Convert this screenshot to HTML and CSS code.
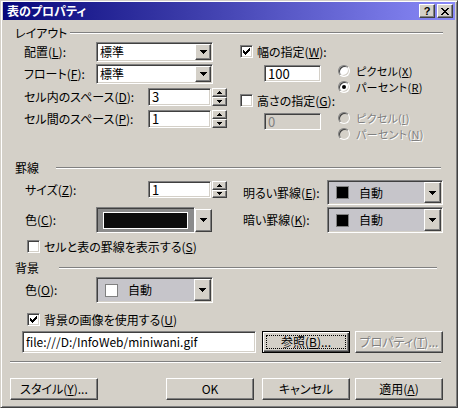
FILE: index.html
```html
<!DOCTYPE html>
<html lang="ja">
<head>
<meta charset="utf-8">
<title>表のプロパティ</title>
<link rel="stylesheet" href="styles.css">
</head>
<body>
<div class="window">
  <div class="caption">
    <span class="title">表のプロパティ</span>
    <span class="cap-btns">
      <span class="cap-btn help">?</span>
      <span class="cap-btn"><svg width="8" height="7" viewBox="0 0 8 7"><path d="M0 0h2v1H0zM6 0h2v1H6zM1 1h2v1H1zM5 1h2v1H5zM2 2h4v1H2zM3 3h2v1H3zM2 4h4v1H2zM1 5h2v1H1zM5 5h2v1H5zM0 6h2v1H0zM6 6h2v1H6z"/></svg></span>
    </span>
  </div>

  <div class="content">
    <div class="group-head gh-layout"><span class="gh-label">レイアウト</span><span class="etch"></span></div>

    <div class="layout">
      <div class="col-left">
        <div class="row r-c1">
          <span class="lbl w72">配置(<u>L</u>):</span>
          <div class="combo w117"><span class="combo-text">標準</span><span class="dd-btn"><svg width="7" height="4" viewBox="0 0 7 4"><path d="M0 0h7v1H6v1H5v1H4v1H3V3H2V2H1V1H0z"/></svg></span></div>
        </div>
        <div class="row r-c2">
          <span class="lbl w72">フロート(<u>F</u>):</span>
          <div class="combo w117"><span class="combo-text">標準</span><span class="dd-btn"><svg width="7" height="4" viewBox="0 0 7 4"><path d="M0 0h7v1H6v1H5v1H4v1H3V3H2V2H1V1H0z"/></svg></span></div>
        </div>
        <div class="row r-s">
          <span class="lbl w124">セル内のスペース(<u>D</u>):</span>
          <div class="spin"><span class="field num">3</span><span class="spinner"><span class="sp-btn"><svg width="5" height="3" viewBox="0 0 5 3"><path d="M2 0h1v1h1v1h1v1H0V2h1V1h1z"/></svg></span><span class="sp-btn"><svg width="5" height="3" viewBox="0 0 5 3"><path d="M0 0h5v1H4v1H3v1H2V2H1V1H0z"/></svg></span></span></div>
        </div>
        <div class="row r-s">
          <span class="lbl w124">セル間のスペース(<u>P</u>):</span>
          <div class="spin"><span class="field num">1</span><span class="spinner"><span class="sp-btn"><svg width="5" height="3" viewBox="0 0 5 3"><path d="M2 0h1v1h1v1h1v1H0V2h1V1h1z"/></svg></span><span class="sp-btn"><svg width="5" height="3" viewBox="0 0 5 3"><path d="M0 0h5v1H4v1H3v1H2V2H1V1H0z"/></svg></span></span></div>
        </div>
      </div>

      <div class="col-right">
        <div class="chk-row cr1">
          <span class="chk"><svg width="7" height="7" viewBox="0 0 7 7"><path d="M0 2h1v1h1v1h1V3h1V2h1V1h1V0h1v3H6v1H5v1H4v1H3v1H2V6H1V5H0z"/></svg></span>
          <span class="chk-label">幅の指定(<u>W</u>):</span>
        </div>
        <div class="sub s1">
          <span class="field num fw">100</span>
          <div class="radios">
            <div class="radio-row"><span class="radio"></span><span class="radio-label">ピクセル(<u>X</u>)</span></div>
            <div class="radio-row"><span class="radio"><span class="dot"></span></span><span class="radio-label">パーセント(<u>R</u>)</span></div>
          </div>
        </div>
        <div class="chk-row cr2">
          <span class="chk"></span>
          <span class="chk-label">高さの指定(<u>G</u>):</span>
        </div>
        <div class="sub s2">
          <span class="field num fw off">0</span>
          <div class="radios">
            <div class="radio-row"><span class="radio off"></span><span class="radio-label dis">ピクセル(<u>I</u>)</span></div>
            <div class="radio-row"><span class="radio off"></span><span class="radio-label dis">パーセント(<u>N</u>)</span></div>
          </div>
        </div>
      </div>
    </div>

    <div class="group-head gh-border"><span class="gh-label">罫線</span><span class="etch"></span></div>

    <div class="border-grid">
      <div class="cell-l">
        <div class="row r-size">
          <span class="lbl w123">サイズ(<u>Z</u>):</span>
          <div class="spin sp17"><span class="field num">1</span><span class="spinner"><span class="sp-btn"><svg width="5" height="3" viewBox="0 0 5 3"><path d="M2 0h1v1h1v1h1v1H0V2h1V1h1z"/></svg></span><span class="sp-btn"><svg width="5" height="3" viewBox="0 0 5 3"><path d="M0 0h5v1H4v1H3v1H2V2H1V1H0z"/></svg></span></span></div>
        </div>
      </div>
      <div class="cell-r">
        <span class="lbl w84">明るい罫線(<u>E</u>):</span>
        <div class="cdrop h25"><span class="cd-val"><span class="sw sw-black"></span><span class="cd-text">自動</span></span><span class="dd-btn tall"><svg width="7" height="4" viewBox="0 0 7 4"><path d="M0 0h7v1H6v1H5v1H4v1H3V3H2V2H1V1H0z"/></svg></span></div>
      </div>
      <div class="cell-l row">
        <span class="lbl w71">色(<u>C</u>):</span>
        <div class="cpick">
          <span class="cp-frame"><span class="cp-sw"></span></span>
          <span class="dd-btn cp-arrow"><svg width="7" height="4" viewBox="0 0 7 4"><path d="M0 0h7v1H6v1H5v1H4v1H3V3H2V2H1V1H0z"/></svg></span>
        </div>
      </div>
      <div class="cell-r">
        <span class="lbl w84">暗い罫線(<u>K</u>):</span>
        <div class="cdrop h26"><span class="cd-val"><span class="sw sw-black"></span><span class="cd-text">自動</span></span><span class="dd-btn tall"><svg width="7" height="4" viewBox="0 0 7 4"><path d="M0 0h7v1H6v1H5v1H4v1H3V3H2V2H1V1H0z"/></svg></span></div>
      </div>
    </div>

    <div class="chk-row cr3">
      <span class="chk"></span>
      <span class="chk-label">セルと表の罫線を表示する(<u>S</u>)</span>
    </div>

    <div class="group-head gh-bg"><span class="gh-label">背景</span><span class="etch"></span></div>

    <div class="row r-bgcolor">
      <span class="lbl w71">色(<u>O</u>):</span>
      <div class="cdrop h26 w117"><span class="cd-val"><span class="sw sw-white"></span><span class="cd-text">自動</span></span><span class="dd-btn tall"><svg width="7" height="4" viewBox="0 0 7 4"><path d="M0 0h7v1H6v1H5v1H4v1H3V3H2V2H1V1H0z"/></svg></span></div>
    </div>

    <div class="chk-row cr4">
      <span class="chk"><svg width="7" height="7" viewBox="0 0 7 7"><path d="M0 2h1v1h1v1h1V3h1V2h1V1h1V0h1v3H6v1H5v1H4v1H3v1H2V6H1V5H0z"/></svg></span>
      <span class="chk-label">背景の画像を使用する(<u>U</u>)</span>
    </div>

    <div class="row r-path">
      <span class="field path">file:///D:/InfoWeb/miniwani.gif</span>
      <span class="btn default b-browse"><span class="focus">参照(<u>B</u>)...</span></span>
      <span class="btn b-prop dis">プロパティ(<u>T</u>)...</span>
    </div>

    <div class="sep"></div>

    <div class="row r-buttons">
      <span class="btn b-style">スタイル(<u>Y</u>)...</span>
      <span class="btn b-ok">OK</span>
      <span class="btn b-cancel">キャンセル</span>
      <span class="btn b-apply">適用(<u>A</u>)</span>
    </div>
  </div>
</div>
</body>
</html>
```

FILE: styles.css
```css
* { box-sizing: border-box; }
html, body { margin: 0; padding: 0; }
body {
  width: 458px; height: 408px; overflow: hidden;
  background: #d4d0c8;
  font-family: "Noto Sans CJK JP", "Noto Sans", sans-serif;
  font-size: 12px; line-height: 14px; color: #000;
  font-feature-settings: "palt" 1;
}
u { text-decoration: underline; text-underline-offset: 1px; }
svg { display: block; fill: #000; }

.window {
  width: 458px; height: 408px;
  background: #d4d0c8;
  border: 1px solid; border-color: #d4d0c8 #404040 #404040 #d4d0c8;
  box-shadow: inset 1px 1px #fff, inset -1px -1px #808080;
  padding: 1px 2px 2px 2px;
  display: flex; flex-direction: column;
}

/* caption */
.caption {
  height: 18px; flex: none;
  display: flex; align-items: center; justify-content: space-between;
  background: linear-gradient(90deg, #08087c 0%, #3a3aa8 40%, #8a8af8 100%);
  padding: 0 2px;
}
.title { color: #fff; font-weight: bold; padding-left: 2px; white-space: nowrap; }
.cap-btns { display: flex; gap: 2px; }
.cap-btn {
  width: 16px; height: 14px;
  display: flex; align-items: center; justify-content: center;
  background: #d4d0c8;
  border: 1px solid; border-color: #fff #404040 #404040 #fff;
  box-shadow: inset -1px -1px #808080;
  font-family: "Liberation Sans", sans-serif; font-weight: bold; font-size: 11px; line-height: 1;
}

/* content */
.content { flex: 1; padding: 6px 12px 0 7px; display: flex; flex-direction: column; }

.group-head { display: flex; align-items: center; height: 14px; margin-left: 5px; flex: none; }
.gh-label { flex: none; white-space: nowrap; }
.etch { flex: 1; height: 2px; border-top: 1px solid #808080; border-bottom: 1px solid #fff; }
.gh-layout .gh-label { width: 55px; }
.gh-border { margin-top: 20px; }
.gh-border .gh-label { width: 41px; }
.gh-border .etch { margin-right: 2px; }
.gh-bg { margin-top: 8px; }
.gh-bg .gh-label { width: 44px; }
.gh-bg .etch { margin-right: 6px; }

.row { display: flex; align-items: center; }
.lbl { flex: none; white-space: nowrap; }
.w71 { width: 71px; } .w72 { width: 72px; } .w84 { width: 84px; }
.w123 { width: 123px; } .w124 { width: 124px; }

/* sunken & raised primitives */
.field, .combo, .chk, .cdrop {
  border: 1px solid; border-color: #808080 #fff #fff #808080;
  box-shadow: inset 1px 1px #404040, inset -1px -1px #d4d0c8;
}
.field { background: #fff; padding: 0 3px; display: flex; align-items: center; white-space: nowrap; }
.field.num { font-size: 13px; }
.field.off { background: #d4d0c8; color: #808080; }

.dd-btn, .sp-btn, .btn {
  background: #d4d0c8;
  border: 1px solid; border-color: #fff #404040 #404040 #fff;
  box-shadow: inset -1px -1px #808080;
  display: flex; align-items: center; justify-content: center;
}

/* layout grid */
.layout { display: grid; grid-template-columns: 230px 1fr; }
.col-left { padding-left: 14px; display: flex; flex-direction: column; }
.r-c1, .r-c2 { margin-top: 2px; height: 20px; }
.r-s { margin-top: 4px; height: 18px; }

.combo { display: flex; align-items: center; height: 20px; background: #fff; padding: 1px; }
.w117 { width: 117px; }
.combo-text { flex: 1; padding-left: 2px; }
.combo .dd-btn { width: 16px; height: 16px; flex: none; }

.spin { display: flex; gap: 1px; height: 18px; }
.spin .field { width: 63px; height: 100%; }
.spinner { width: 15px; display: flex; flex-direction: column; }
.sp-btn { flex: 1; }

.col-right { display: flex; flex-direction: column; }
.chk-row { display: flex; align-items: center; height: 13px; flex: none; }
.chk { width: 13px; height: 13px; flex: none; background: #fff; display: flex; align-items: center; justify-content: center; }
.chk-label { margin-left: 4px; white-space: nowrap; }
.cr1 { margin-top: 5px; }
.cr2 { margin-top: 0; }
.cr3 { margin-top: 7px; padding-left: 17px; }
.cr4 { margin-top: 10px; padding-left: 17px; }

.sub { display: flex; padding-left: 24px; align-items: flex-start; height: 30px; }
.s1 { margin-top: 6px; }
.s2 { margin-top: 4px; }
.fw { width: 57px; height: 17px; flex: none; }
.s1 .fw { margin-top: 1px; }
.s2 .fw { margin-top: 2px; }
.radios { margin-left: 17px; margin-top: -1px; display: flex; flex-direction: column; }
.radio-row { height: 16px; display: flex; align-items: center; }
.radio {
  width: 12px; height: 12px; flex: none; border-radius: 50%;
  background: #fff;
  border: 1px solid; border-color: #808080 #fff #fff #808080;
  box-shadow: inset 1px 1px #404040, inset -1px -1px #d4d0c8;
  display: flex; align-items: center; justify-content: center;
}
.radio.off { background: #d4d0c8; }
.dot { width: 4px; height: 4px; border-radius: 50%; background: #000; }
.radio-label { margin-left: 6px; white-space: nowrap; font-size: 11px; line-height: 12px; letter-spacing: 0.3px; }
.dis { color: #808080; text-shadow: 1px 1px #fff; }

/* border section */
.border-grid {
  display: grid; grid-template-columns: 233px 1fr; grid-template-rows: 25px 26px;
  row-gap: 2px; margin-top: 5px;
}
.cell-l { padding-left: 15px; }
.r-size { margin-top: 1px; height: 17px; }
.spin.sp17 { height: 17px; }
.cell-r { display: flex; align-items: center; }

.cdrop { display: flex; background: #c6c5ca; padding: 1px; width: 116px; flex: none; }
.cdrop.w117 { width: 117px; }
.h25 { height: 25px; } .h26 { height: 26px; }
.cd-val { flex: 1; display: flex; align-items: center; padding-left: 7px; }
.sw { width: 13px; height: 13px; border: 1px solid #808080; flex: none; }
.sw-black { background: #000; }
.sw-white { background: #fff; }
.cd-text { margin-left: 10px; }
.dd-btn.tall { width: 17px; height: 100%; flex: none; }

.cpick { display: flex; align-items: center; width: 116px; height: 26px; }
.cp-frame {
  flex: 1; height: 100%; display: flex;
  border: 1px solid; border-color: #808080 #fff #fff #808080;
  box-shadow: inset 1px 1px #404040;
  background: #8c8c8c;
  padding: 4px 6px 3px 6px;
}
.cp-sw { flex: 1; border: 1px solid #fff; background: #0c0c0c; }
.cp-arrow { width: 17px; height: 23px; flex: none; }

/* background section */
.r-bgcolor { margin-top: 2px; height: 26px; padding-left: 15px; }
.r-path { margin-top: 5px; height: 22px; padding-left: 12px; align-items: stretch; }
.field.path { width: 234px; }
.btn { height: 22px; width: 88px; flex: none; white-space: nowrap; }
.btn.default {
  border: 1px solid #000;
  box-shadow: inset 1px 1px #fff, inset -1px -1px #404040, inset -2px -2px #808080;
  padding: 3px;
  margin-left: 6px;
}
.focus { flex: 1; align-self: stretch; border: 1px dotted #000; display: flex; align-items: center; justify-content: center; }
.b-prop { margin-left: 5px; }

.sep { height: 2px; margin-top: 8px; margin-right: 2px; border-top: 1px solid #808080; border-bottom: 1px solid #fff; flex: none; }

.r-buttons { margin-top: 15px; height: 22px; }
.b-ok { margin-left: 68px; }
.b-cancel { margin-left: 8px; }
.b-apply { margin-left: 5px; }
```
